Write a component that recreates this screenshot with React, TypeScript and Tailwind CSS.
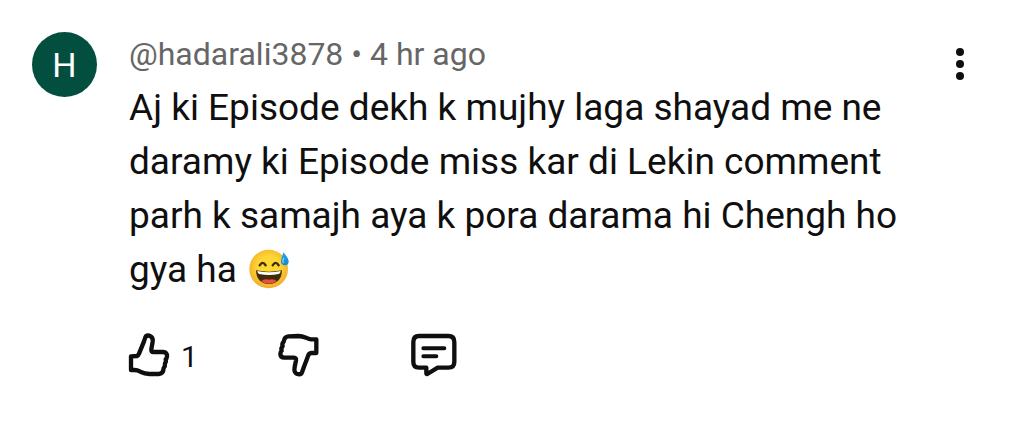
interface Comment {
  initial: string;
  handle: string;
  age: string;
  text: string;
  likes: number;
}

const comment: Comment = {
  initial: 'H',
  handle: '@hadarali3878',
  age: '4 hr ago',
  text: 'Aj ki Episode dekh k mujhy laga shayad me ne daramy ki Episode miss kar di Lekin comment parh k samajh aya k pora darama hi Chengh ho gya ha',
  likes: 1,
};

function LikeIcon() {
  return (
    <svg className="size-11 overflow-visible" viewBox="30 22 132 132" fill="none" stroke="currentColor" strokeWidth="13" strokeLinejoin="round">
      <path d="M36 92 L54 91 Q58 89 60 84 L75 47 L79 35 Q82 28 90 30 Q103 34 101 48 L97 71 Q96 79 103 79 L132 79 Q145 80 144 92 Q143 99 140 101 Q142 109 138 113 Q139 122 134 127 Q133 144 119 145 L92 145 Q77 144 64 138 Q55 133 46 133 L36 133 Z" />
    </svg>
  );
}

function DislikeIcon() {
  return (
    <svg className="size-11 overflow-visible" viewBox="30 27 132 132" fill="none" stroke="currentColor" strokeWidth="13" strokeLinejoin="round">
      <path d="M142 46 L126 46 Q119 45 111 41 Q99 36 88 36 L58 37 Q46 38 44 53 Q38 59 41 67 Q35 72 38 80 Q34 83 34 90 Q35 101 46 101 L75 101 Q82 101 81 109 L77 129 Q74 145 83 149 Q95 154 99 145 L105 128 L118 94 Q120 88 127 87 L142 87 Z" />
    </svg>
  );
}

function ReplyIcon() {
  return (
    <svg className="size-11 overflow-visible" viewBox="30 27 132 132" fill="none" stroke="currentColor" strokeWidth="13" strokeLinecap="round" strokeLinejoin="round">
      <path d="M54 36 H142 Q160 36 160 54 V114 Q160 131 142 131 H110 L79 150 Q76 151 76 148 V131 H54 Q37 131 37 114 V54 Q37 36 54 36 Z" />
      <path d="M67 73 H130 M67 97 H106" strokeWidth="12" />
    </svg>
  );
}

function SweatSmile() {
  return (
    <svg className="ml-3 inline-block size-10 align-[-7px]" viewBox="0 0 120 120" role="img" aria-label="grinning face with sweat">
      <defs>
        <radialGradient id="face" cx="50%" cy="45%" r="55%">
          <stop offset="0.5" stopColor="#fdd835" />
          <stop offset="1" stopColor="#f2ac2c" />
        </radialGradient>
        <linearGradient id="drop" x1="0" y1="0" x2="0" y2="1">
          <stop offset="0" stopColor="#29a7e8" />
          <stop offset="1" stopColor="#1686cd" />
        </linearGradient>
      </defs>
      <circle cx="59" cy="60" r="58" fill="url(#face)" />
      <path d="M32 49 Q41 34 50 49 M71 49 Q80 34 89 49" fill="none" stroke="#422b0d" strokeWidth="7" strokeLinecap="round" />
      <path d="M21 64 Q60 72 99 64 Q98 104 60 105 Q22 104 21 64 Z" fill="#422b0d" />
      <path d="M25 66 Q60 74 95 66 Q95 73 89 75 Q60 81 31 75 Q25 73 25 66 Z" fill="#fff" />
      <path d="M36 97 Q46 88 60 92 Q74 88 84 97 Q74 104 60 104 Q46 104 36 97 Z" fill="#ed4f3f" />
      <path d="M103 10 Q119 27 119 38 Q118 49 107 49 Q96 48 96 37 Q97 28 103 10 Z" fill="url(#drop)" />
      <path d="M104 28 Q100 37 103 41" fill="none" stroke="#81d4fa" strokeWidth="4" strokeLinecap="round" />
    </svg>
  );
}

export default function App() {
  return (
    <main className="min-h-screen bg-white font-[Roboto,sans-serif] text-[#0f0f0f]">
      <article className="flex items-start py-8 pr-12 pl-8">
        <div className="mr-8 flex size-[65px] shrink-0 items-center justify-center rounded-full bg-[#034f3f] pt-px text-[34px] leading-10 text-white">
          {comment.initial}
        </div>
        <div className="min-w-0 flex-1">
          <header className="mb-[5px] text-[32px] leading-11 text-[#666]">
            {comment.handle} • {comment.age}
          </header>
          <p className="max-w-[780px] text-[37px] leading-[54px]">
            {comment.text}
            <SweatSmile />
          </p>
          <div className="mt-9 flex items-center">
            <button type="button" aria-label="Like" className="flex w-[150px] items-center gap-2 text-[30px] leading-8">
              <LikeIcon />
              <span className="pt-1">{comment.likes}</span>
            </button>
            <button type="button" aria-label="Dislike" className="w-[132px]">
              <DislikeIcon />
            </button>
            <button type="button" aria-label="Reply">
              <ReplyIcon />
            </button>
          </div>
        </div>
        <button type="button" aria-label="More actions" className="flex h-16 w-8 shrink-0 flex-col items-center justify-center gap-1">
          <span className="size-2 rounded-full bg-[#0f0f0f]" />
          <span className="size-2 rounded-full bg-[#0f0f0f]" />
          <span className="size-2 rounded-full bg-[#0f0f0f]" />
        </button>
      </article>
    </main>
  );
}
